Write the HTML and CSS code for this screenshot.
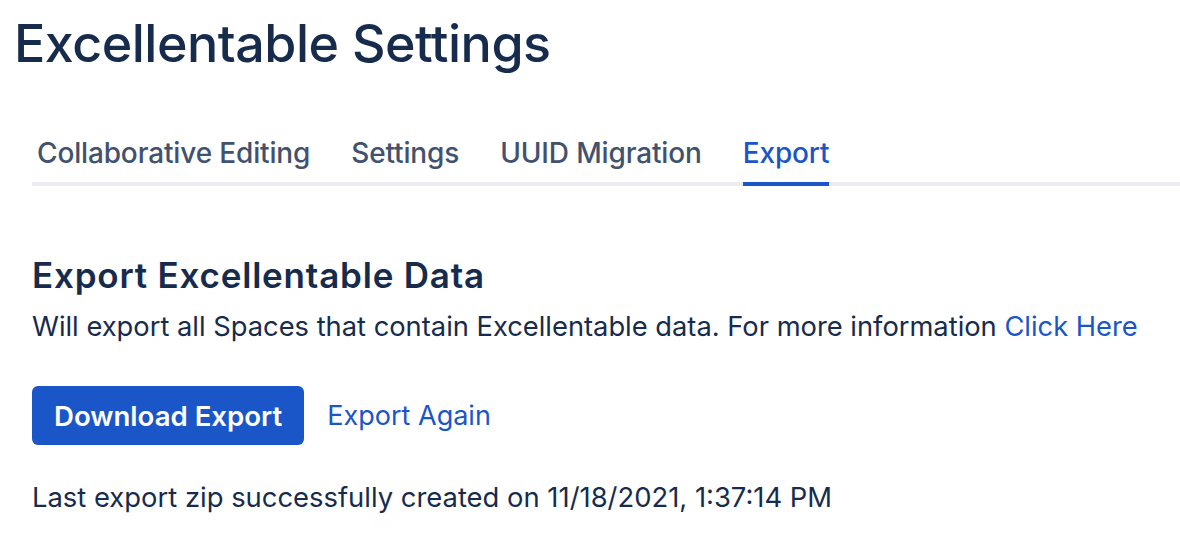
FILE: index.html
```html
<!DOCTYPE html>
<html>
<head>
<meta charset="utf-8">
<link rel="stylesheet" href="styles.css">
</head>
<body>
<div class="page">
  <h1 class="title">Excellentable Settings</h1>
  <div class="content">
    <nav class="tabs">
      <div class="tab">Collaborative Editing</div>
      <div class="tab">Settings</div>
      <div class="tab">UUID Migration</div>
      <div class="tab active">Export</div>
    </nav>
    <h2 class="heading">Export Excellentable Data</h2>
    <p class="desc">Will export all Spaces that contain Excellentable data. For more information <a class="link" href="#">Click Here</a></p>
    <div class="actions">
      <button class="btn">Download Export</button>
      <a class="link again" href="#">Export Again</a>
    </div>
    <p class="status">Last export zip successfully created on 11/18/2021, 1:37:14 PM</p>
  </div>
</div>
</body>
</html>
```

FILE: styles.css
```css
* { box-sizing: border-box; }
html, body { margin: 0; padding: 0; background: #fff; }
body { font-family: Inter, "Noto Sans", sans-serif; color: #172B4D; }
.page { padding: 14px 0 0 14px; }
.title { margin: 0; font-size: 52px; font-weight: 500; line-height: 60px; letter-spacing: -0.5px; color: #172B4D; }
.content { padding-left: 18px; }
.tabs { display: flex; margin-top: 63px; padding-left: 5px; border-bottom: 4px solid #EBECF0; }
.tab { font-size: 28px; font-weight: 500; color: #42526E; padding: 0 0 13px; margin-right: 41px; position: relative; line-height: 32px; letter-spacing: -0.15px; }
.tab.active { color: #1A56C8; }
.tab.active::after { content: ""; position: absolute; left: 0; right: 0; bottom: -4px; height: 4px; background: #1A56C8; }
.heading { margin: 69px 0 0; font-size: 35px; font-weight: 600; line-height: 40px; letter-spacing: 0.8px; color: #172B4D; }
.desc { margin: 14px 0 0; font-size: 27.3px; line-height: 36px; color: #172B4D; }
.link { color: #1A56C8; text-decoration: none; }
.actions { display: flex; align-items: center; margin-top: 41px; gap: 23px; }
.btn { font-family: inherit; background: #1A56C8; color: #fff; border: none; border-radius: 6px; height: 59px; padding: 0 22px; font-size: 27.6px; font-weight: 600; }
.again { font-size: 27px; }
.status { margin: 34px 0 0; font-size: 27.4px; line-height: 36px; color: #172B4D; }
```
